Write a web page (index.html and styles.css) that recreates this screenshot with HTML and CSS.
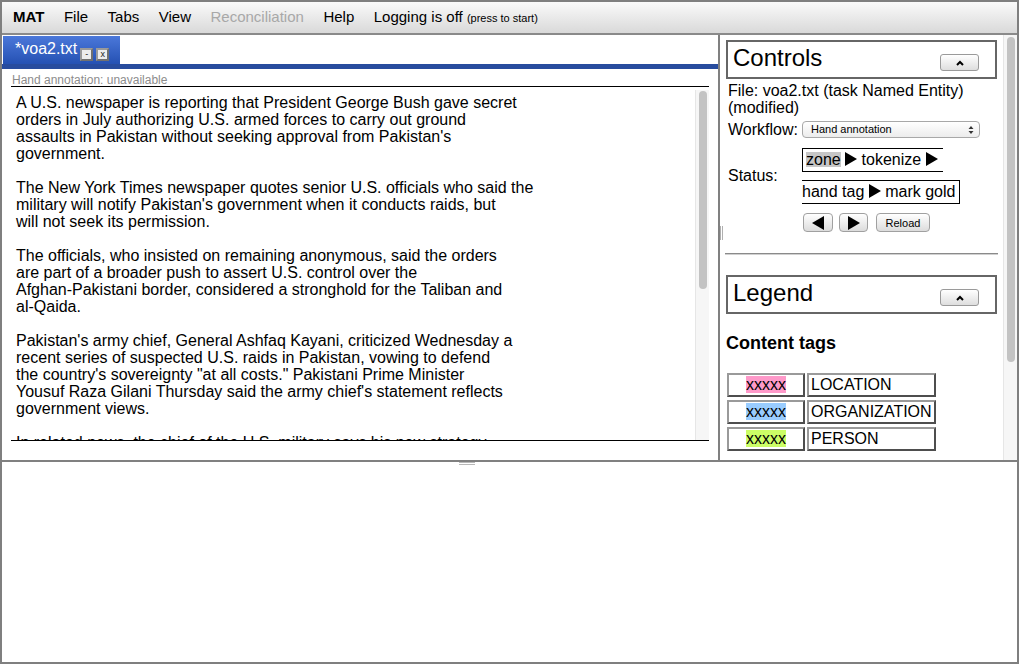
FILE: index.html
```html
<!DOCTYPE html>
<html>
<head>
<meta charset="utf-8">
<link rel="stylesheet" href="styles.css">
</head>
<body>
<div class="app">
  <div class="menubar">
    <span class="mi mi-bold">MAT</span>
    <span class="mi">File</span>
    <span class="mi">Tabs</span>
    <span class="mi">View</span>
    <span class="mi mi-dis">Reconciliation</span>
    <span class="mi">Help</span>
    <span class="mi">Logging is off <small class="mi-small">(press to start)</small></span>
  </div>
  <div class="main">
    <div class="left">
      <div class="tabbar">
        <div class="tab">
          <span class="tab-title">*voa2.txt</span>
          <span class="tab-btn">-</span>
          <span class="tab-btn">x</span>
        </div>
      </div>
      <div class="tabstrip"></div>
      <div class="docpane">
        <div class="annot">Hand annotation: unavailable</div>
        <div class="docbox">
          <div class="doctext">A U.S. newspaper is reporting that President George Bush gave secret
orders in July authorizing U.S. armed forces to carry out ground
assaults in Pakistan without seeking approval from Pakistan's
government.

The New York Times newspaper quotes senior U.S. officials who said the
military will notify Pakistan's government when it conducts raids, but
will not seek its permission.

The officials, who insisted on remaining anonymous, said the orders
are part of a broader push to assert U.S. control over the
Afghan-Pakistani border, considered a stronghold for the Taliban and
al-Qaida.

Pakistan's army chief, General Ashfaq Kayani, criticized Wednesday a
recent series of suspected U.S. raids in Pakistan, vowing to defend
the country's sovereignty "at all costs." Pakistani Prime Minister
Yousuf Raza Gilani Thursday said the army chief's statement reflects
government views.

In related news, the chief of the U.S. military says his new strategy
for the region will focus on both Afghanistan and Pakistan.</div>
          <div class="vscroll doc-scroll"><div class="thumb doc-thumb"></div></div>
        </div>
      </div>
    </div>
    <div class="vsplit"><span class="vhandle"></span></div>
    <div class="right">
      <div class="rcontent">
        <div class="panelhead">
          <span class="panelhead-title">Controls</span>
          <span class="collapse"><svg width="10" height="8" viewBox="0 0 10 8"><polyline points="2,6 5,3 8,6" fill="none" stroke="#000" stroke-width="2"/></svg></span>
        </div>
        <div class="fileinfo">File: voa2.txt (task Named Entity)<br>(modified)</div>
        <div class="formrow wf-row">
          <span class="flabel">Workflow:</span>
          <span class="select">Hand annotation<svg class="sel-arrow" width="6" height="10" viewBox="0 0 6 10"><path d="M0.5 4 L3 1 L5.5 4 Z M0.5 6 L3 9 L5.5 6 Z" fill="#333"/></svg></span>
        </div>
        <div class="formrow st-row">
          <span class="flabel">Status:</span>
          <div class="stboxes">
            <div class="stbox st1"><span class="zone">zone</span> <svg class="tri" width="12" height="14" viewBox="0 0 12 14"><path d="M0 0 L12 7 L0 14 Z" fill="#000"/></svg> tokenize <svg class="tri" width="12" height="14" viewBox="0 0 12 14"><path d="M0 0 L12 7 L0 14 Z" fill="#000"/></svg></div>
            <div class="stbox st2">hand tag <svg class="tri" width="12" height="14" viewBox="0 0 12 14"><path d="M0 0 L12 7 L0 14 Z" fill="#000"/></svg> mark gold</div>
          </div>
        </div>
        <div class="btnrow">
          <span class="btn btn-arrow"><svg width="12" height="14" viewBox="0 0 12 14"><path d="M12 0 L0 7 L12 14 Z" fill="#000"/></svg></span>
          <span class="btn btn-arrow"><svg width="12" height="14" viewBox="0 0 12 14"><path d="M0 0 L12 7 L0 14 Z" fill="#000"/></svg></span>
          <span class="btn btn-reload">Reload</span>
        </div>
        <div class="rule"></div>
        <div class="panelhead">
          <span class="panelhead-title">Legend</span>
          <span class="collapse"><svg width="10" height="8" viewBox="0 0 10 8"><polyline points="2,6 5,3 8,6" fill="none" stroke="#000" stroke-width="2"/></svg></span>
        </div>
        <div class="ctags">Content tags</div>
        <table class="legend">
          <tr><td class="sw"><span class="xx pink">xxxxx</span></td><td class="lbl">LOCATION</td></tr>
          <tr><td class="sw"><span class="xx blue">xxxxx</span></td><td class="lbl">ORGANIZATION</td></tr>
          <tr><td class="sw"><span class="xx green">xxxxx</span></td><td class="lbl">PERSON</td></tr>
        </table>
      </div>
      <div class="vscroll r-scroll"><div class="thumb r-thumb"></div></div>
    </div>
  </div>
  <div class="hsplit"></div>
  <div class="bottom"><span class="hhandle"></span></div>
</div>
</body>
</html>
```

FILE: styles.css
```css
* { box-sizing: border-box; }
html, body { margin: 0; padding: 0; background: #fff; }
body { font-family: "Liberation Sans", Arial, sans-serif; color: #000; }

.app {
  width: 1019px;
  height: 664px;
  border: 2px solid #7f7f7f;
  display: flex;
  flex-direction: column;
  overflow: hidden;
}

/* menu */
.menubar {
  height: 33px;
  flex: none;
  border-bottom: 2px solid #8a8a8a;
  background: linear-gradient(#fafafa, #d9d9d9);
  display: flex;
  align-items: center;
  padding: 0 0 2px 1.25px;
  font-size: 15px;
  white-space: nowrap;
}
.mi { padding: 0 9.75px; }
.mi-bold { font-weight: bold; }
.mi-dis { color: #a8a8a8; }
.mi-small { font-size: 11px; }

/* main */
.main {
  height: 425px;
  flex: none;
  display: flex;
}
.left {
  width: 716px;
  flex: none;
  display: flex;
  flex-direction: column;
  background: #fff;
}
.tabbar {
  height: 29px;
  padding: 1px 0 0 1px;
  display: flex;
}
.tab {
  width: 117px;
  background: linear-gradient(#4b78da, #2551b3);
  display: flex;
  align-items: flex-start;
  padding: 4px 0 0 12px;
  color: #fff;
  font-size: 16px;
}
.tab-title { line-height: 18px; margin-right: 1px; }
.tab-btn {
  width: 13px;
  height: 13px;
  margin-top: 8px;
  margin-left: 2px;
  background: #ececec;
  border: 2px solid #9a9a9a;
  border-right-color: #707070;
  border-bottom-color: #707070;
  color: #222;
  font-size: 9px;
  line-height: 9px;
  text-align: center;
}
.tab-btn + .tab-btn { margin-left: 3px; }
.tabstrip {
  height: 5px;
  background: #284c9e;
}
.docpane {
  flex: 1;
  padding: 3px 9px 0 9px;
}
.annot {
  font-size: 12px;
  line-height: 14px;
  color: #8c8c8c;
  border-bottom: 1px solid #000;
  padding: 1px 0 0 1px;
  height: 15px;
}
.docbox {
  height: 354px;
  border-bottom: 1px solid #000;
  display: flex;
  overflow: hidden;
}
.doctext {
  flex: 1;
  white-space: pre-line;
  font-size: 16px;
  line-height: 17px;
  padding: 7px 0 0 5px;
  overflow: hidden;
}

.vscroll {
  width: 14px;
  flex: none;
  background: #f6f6f6;
  border-left: 1px solid #e6e6e6;
  position: relative;
}
.thumb {
  background: #c3c3c3;
  border-radius: 4px;
  margin-left: 3px;
  width: 8px;
}
.doc-scroll { margin-top: 3px; }
.doc-thumb { margin-top: 1px; height: 198px; }

.vsplit {
  width: 3px;
  flex: none;
  background: linear-gradient(to right, #808080 2px, #fff 2px);
  position: relative;
}
.vhandle {
  position: absolute;
  left: 2px;
  top: 191px;
  width: 3px;
  height: 14px;
  border-left: 1px solid #b0b0b0;
  border-right: 1px solid #b0b0b0;
}

.right {
  width: 296px;
  flex: none;
  display: flex;
  background: #fff;
}
.rcontent {
  width: 282px;
  flex: none;
  padding: 5px 6px 0 5px;
  overflow: hidden;
  font-size: 16px;
}
.r-scroll { width: 14px; }
.r-thumb { margin-top: 2px; height: 325px; }

.panelhead {
  height: 39px;
  border: 2px solid #666;
  display: flex;
  justify-content: space-between;
  align-items: flex-start;
  padding: 1px 16px 0 5px;
}
.panelhead-title { font-size: 24px; line-height: 29px; }
.collapse {
  margin-top: 11px;
  width: 39px;
  height: 17px;
  border: 1px solid #9a9a9a;
  border-radius: 3px;
  background: linear-gradient(#ffffff, #dedede);
  display: flex;
  align-items: center;
  justify-content: center;
}
.fileinfo {
  line-height: 17px;
  margin-top: 3px;
  padding-left: 2px;
}
.formrow {
  display: flex;
  align-items: center;
  padding-left: 2px;
}
.flabel { width: 74px; flex: none; }
.wf-row { margin-top: 4px; height: 19px; }
.select {
  width: 178px;
  height: 17px;
  border: 1px solid #a8a8a8;
  border-radius: 4px;
  background: linear-gradient(#ffffff, #ececec);
  font-size: 11px;
  line-height: 15px;
  padding-left: 8px;
  position: relative;
}
.sel-arrow { position: absolute; right: 5px; top: 3px; }

.st-row { margin-top: 9px; }
.stboxes { display: flex; flex-direction: column; gap: 8px; }
.stbox {
  height: 24px;
  border: 1px solid #000;
  line-height: 22px;
  white-space: nowrap;
}
.st1 { width: 141px; border-right: none; padding-left: 3px; }
.st2 { width: 158px; border-left: none; }
.zone { background: #c6c6c6; display: inline-block; line-height: 15px; }
.tri { vertical-align: -1px; }

.btnrow {
  display: flex;
  gap: 6px;
  margin-top: 9px;
  padding-left: 77px;
}
.btn {
  height: 19px;
  border: 1px solid #a0a0a0;
  border-radius: 4px;
  background: linear-gradient(#ffffff, #dcdcdc);
  display: flex;
  align-items: center;
  justify-content: center;
}
.btn-arrow { width: 30px; }
.btn-arrow + .btn-arrow { width: 29px; }
.btn-reload { width: 54px; font-size: 11px; margin-left: 2px; }

.rule {
  margin: 21px -1px 20px -1px;
  height: 2px;
  background: #8a8a8a;
  border-bottom: 1px solid #d0d0d0;
}
.ctags {
  font-weight: bold;
  font-size: 18px;
  line-height: 22px;
  margin-top: 18px;
}
.legend {
  border-collapse: separate;
  border-spacing: 2px 3px;
  margin: 16px 0 0 -1px;
  font-size: 16px;
}
.legend td {
  height: 24px;
  border: 2px solid;
  border-color: #9a9a9a #4e4e4e #4e4e4e #9a9a9a;
  padding: 0;
  line-height: 18px;
}
.sw { width: 78px; text-align: center; }
.lbl { width: 129px; padding-left: 2px !important; }
.xx { padding: 0; }
.pink { background: #fe99c9; }
.blue { background: #99ccfe; }
.green { background: #ccfe66; }

.hsplit {
  height: 3px;
  flex: none;
  background: linear-gradient(#808080 2px, #fff 2px);
}
.bottom {
  flex: 1;
  background: #fff;
  position: relative;
}
.hhandle {
  position: absolute;
  left: 457px;
  top: -1px;
  width: 16px;
  height: 3px;
  border-top: 1px solid #b8b8b8;
  border-bottom: 1px solid #b8b8b8;
}
```
